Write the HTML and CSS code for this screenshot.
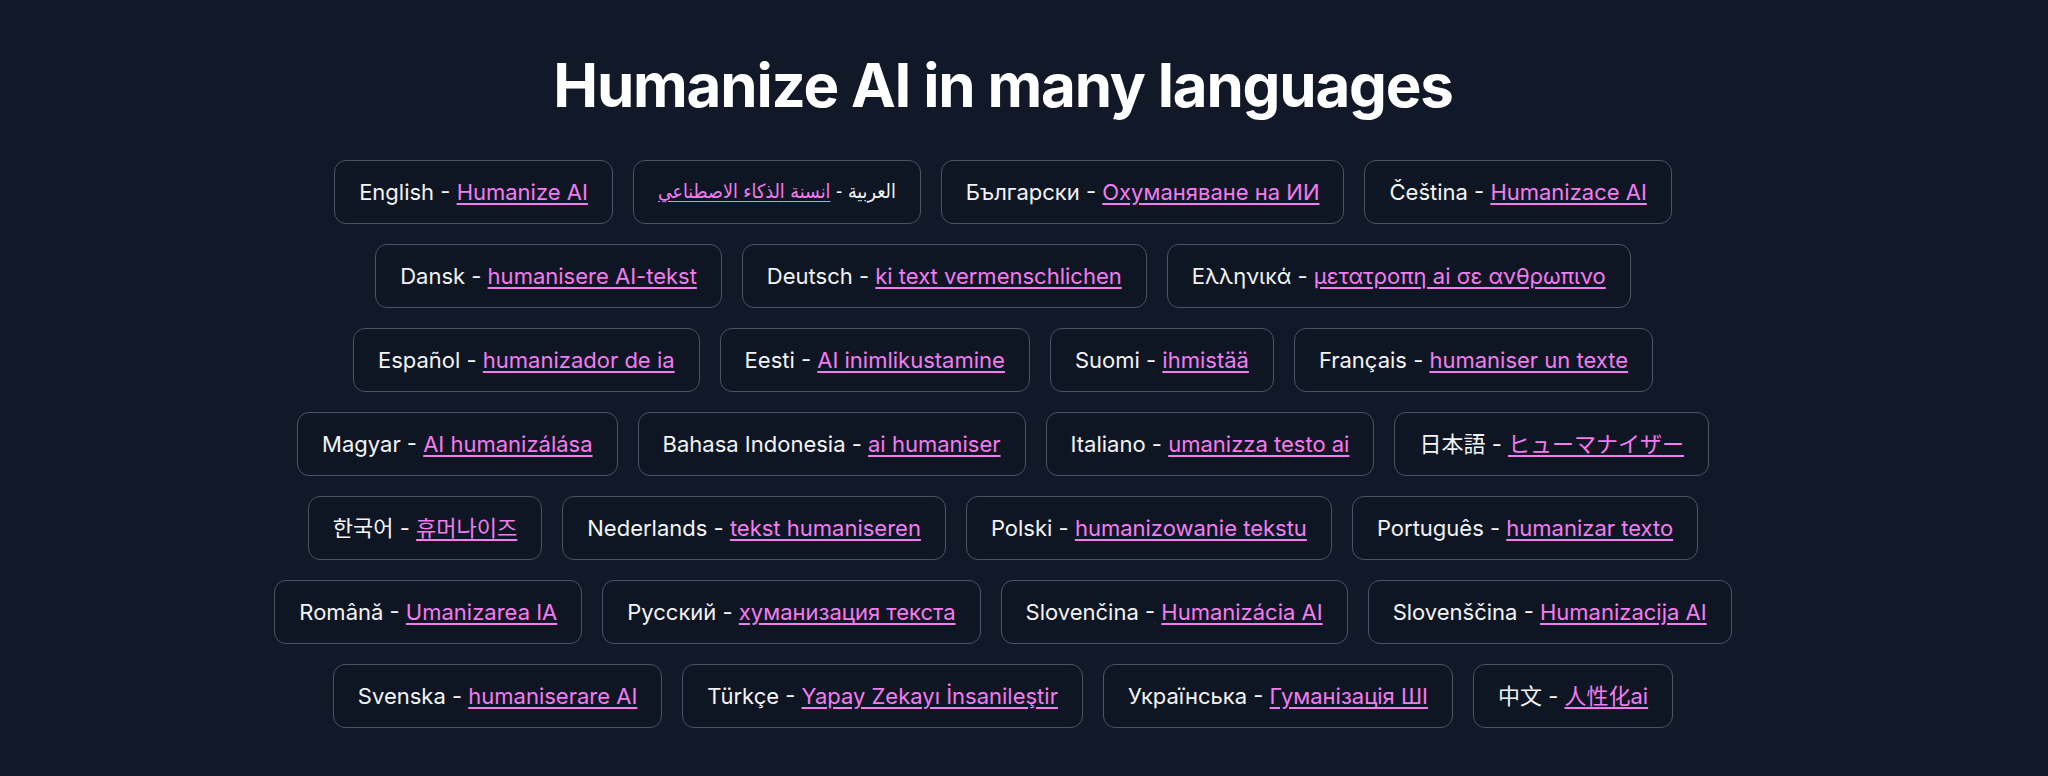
FILE: index.html
```html
<!DOCTYPE html>
<html lang="en">
<head>
<meta charset="utf-8">
<title>Humanize AI in many languages</title>
<link rel="stylesheet" href="styles.css">
</head>
<body>
<div class="page">
	<h1 class="title">Humanize AI in many languages</h1>
	<ul class="langs">
		<li class="lang">English - <a href="#">Humanize AI</a></li>
		<li class="lang" lang="ar">العربية - <a href="#">انسنة الذكاء الاصطناعي</a></li>
		<li class="lang">Български - <a href="#">Охуманяване на ИИ</a></li>
		<li class="lang">Čeština - <a href="#">Humanizace AI</a></li>
		<li class="lang">Dansk - <a href="#">humanisere AI-tekst</a></li>
		<li class="lang">Deutsch - <a href="#">ki text vermenschlichen</a></li>
		<li class="lang">Ελληνικά - <a href="#">μετατροπη ai σε ανθρωπινο</a></li>
		<li class="lang">Español - <a href="#">humanizador de ia</a></li>
		<li class="lang">Eesti - <a href="#">AI inimlikustamine</a></li>
		<li class="lang">Suomi - <a href="#">ihmistää</a></li>
		<li class="lang">Français - <a href="#">humaniser un texte</a></li>
		<li class="lang">Magyar - <a href="#">AI humanizálása</a></li>
		<li class="lang">Bahasa Indonesia - <a href="#">ai humaniser</a></li>
		<li class="lang">Italiano - <a href="#">umanizza testo ai</a></li>
		<li class="lang" lang="ja">日本語 - <a href="#">ヒューマナイザー</a></li>
		<li class="lang" lang="ko">한국어 - <a href="#">휴머나이즈</a></li>
		<li class="lang">Nederlands - <a href="#">tekst humaniseren</a></li>
		<li class="lang">Polski - <a href="#">humanizowanie tekstu</a></li>
		<li class="lang">Português - <a href="#">humanizar texto</a></li>
		<li class="lang">Română - <a href="#">Umanizarea IA</a></li>
		<li class="lang">Русский - <a href="#">хуманизация текста</a></li>
		<li class="lang">Slovenčina - <a href="#">Humanizácia AI</a></li>
		<li class="lang">Slovenščina - <a href="#">Humanizacija AI</a></li>
		<li class="lang">Svenska - <a href="#">humaniserare AI</a></li>
		<li class="lang">Türkçe - <a href="#">Yapay Zekayı İnsanileştir</a></li>
		<li class="lang">Українська - <a href="#">Гуманізація ШІ</a></li>
		<li class="lang" lang="zh">中文 - <a href="#">人性化ai</a></li>
	</ul>
</div>
</body>
</html>
```

FILE: styles.css
```css
html, body {
	margin: 0;
	padding: 0;
	background: #111827;
}

body {
	color: #f3f4f6;
	font-family: Inter, "Noto Sans", "DejaVu Sans", sans-serif;
}

.page {
	padding: 55px 42px 60px 0;
}

.title {
	margin: 0 0 45px 0;
	font-size: 60px;
	line-height: 1;
	font-weight: 700;
	letter-spacing: -0.02em;
	text-align: center;
	color: #fff;
}

.langs {
	list-style: none;
	margin: 0 auto;
	padding: 0;
	max-width: 1520px;
	display: flex;
	flex-wrap: wrap;
	justify-content: center;
	gap: 20px;
}

.lang {
	padding: 16px 24px;
	border: 1px solid #475569;
	border-radius: 12px;
	background: #0f1623;
	font-size: 22px;
	line-height: 30px;
	white-space: nowrap;
}

.lang a {
	color: #f27cf0;
	text-decoration: underline;
	text-underline-offset: 3px;
}

/* the arabic face we have is wider than the original one */
.lang[lang="ar"] {
	font-family: "DejaVu Sans Condensed", "DejaVu Sans", sans-serif;
	font-size: 19.5px;
}

.lang[lang="ja"] {
	font-family: Inter, "Noto Sans CJK JP", sans-serif;
}

.lang[lang="ko"] {
	font-family: Inter, "Noto Sans CJK KR", sans-serif;
}

.lang[lang="zh"] {
	font-family: Inter, "Noto Sans CJK SC", sans-serif;
}
```
